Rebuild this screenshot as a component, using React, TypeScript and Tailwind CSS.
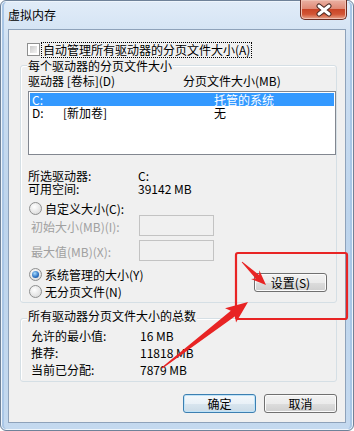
type Pt = [number, number];

// wedge-shaped annotation arrow, thin at the tail and widening towards the head
function arrowPoints(tail: Pt, tip: Pt, headLen: number, headHalf: number, neckHalf: number, tailHalf: number) {
  const dx = tip[0] - tail[0];
  const dy = tip[1] - tail[1];
  const len = Math.hypot(dx, dy);
  const ux = dx / len;
  const uy = dy / len;
  const nx = -uy;
  const ny = ux;
  const bx = tip[0] - ux * headLen;
  const by = tip[1] - uy * headLen;
  const pts: Pt[] = [
    [tail[0] + nx * tailHalf, tail[1] + ny * tailHalf],
    [bx + nx * neckHalf, by + ny * neckHalf],
    [bx + nx * headHalf - ux * 3, by + ny * headHalf - uy * 3],
    tip,
    [bx - nx * headHalf - ux * 3, by - ny * headHalf - uy * 3],
    [bx - nx * neckHalf, by - ny * neckHalf],
    [tail[0] - nx * tailHalf, tail[1] - ny * tailHalf],
  ];
  return pts.map((p) => p.join(",")).join(" ");
}

function Radio({ checked }: { checked?: boolean }) {
  return (
    <span className="flex h-[13px] w-[13px] shrink-0 items-center justify-center rounded-full border border-[#8e8f8f] bg-[radial-gradient(circle_at_40%_35%,#ffffff,#dcdcdc_80%)]">
      {checked && (
        <span className="h-[7px] w-[7px] rounded-full bg-[radial-gradient(circle_at_40%_35%,#a6dcff,#2a6fc0_60%,#1b4f91)]" />
      )}
    </span>
  );
}

function Button({ label, primary }: { label: string; primary?: boolean }) {
  return (
    <div
      className={
        primary
          ? "flex h-[19px] w-[73px] items-center justify-center rounded-[3px] border border-[#3c7fb1] bg-[linear-gradient(#f4f8fb_0%,#e9f1f7_50%,#d9e6ef_50%,#cbdbe7_100%)] text-[12px] leading-[12px] shadow-[inset_0_0_0_1px_#bfe3f8]"
          : "flex h-[19px] w-[73px] items-center justify-center rounded-[3px] border border-[#707070] bg-[linear-gradient(#f2f2f2_0%,#ebebeb_50%,#dddddd_50%,#cfcfcf_100%)] text-[12px] leading-[12px] shadow-[inset_0_0_0_1px_#fbfbfb]"
      }
    >
      {label}
    </div>
  );
}

function TextBox() {
  return <div className="h-[21px] w-[75px] border border-[#c3c3c3] bg-[#f0f0f0]" />;
}

export default function App() {
  return (
    <div className="relative h-[431px] w-[354px] font-['Noto_Sans_CJK_SC',sans-serif] text-[12px] leading-[12px] text-black">
      <div className="flex h-full w-full flex-col rounded-[6px] border border-[#6f8299] bg-[linear-gradient(180deg,#e1ecf8_0%,#cfe0f2_10%,#bdd4ec_50%,#c4d9ef_100%)] shadow-[inset_0_0_0_1px_#eef5fc,inset_3px_0_0_#a9c6e6,inset_-3px_0_0_#a9c6e6]">
        {/* title bar */}
        <div className="flex h-[28px] items-start justify-between">
          <div className="pl-[7px] pt-[8px]">虚拟内存</div>
          <div className="-mt-[1px] mr-[6px] flex h-[20px] w-[47px] items-center justify-center rounded-b-[5px] border border-t-0 border-[#6b2c22] bg-[linear-gradient(#eab1a3_0%,#e08a76_45%,#c94527_50%,#d25535_75%,#e8a58d_100%)] shadow-[inset_0_0_0_1px_#f0c0b2]">
            <svg width="18" height="14" viewBox="0 0 18 14">
              <path d="M4 3 L14 11 M14 3 L4 11" stroke="#4a2a24" strokeWidth="5" strokeLinecap="round" />
              <path d="M4 3 L14 11 M14 3 L4 11" stroke="#ffffff" strokeWidth="3" strokeLinecap="round" />
            </svg>
          </div>
        </div>

        {/* client area */}
        <div className="ml-[7px] flex h-[394px] w-[338px] flex-col border border-[#8ea2ba] bg-[#f0f0f0]">
          {/* auto manage checkbox */}
          <div className="ml-[18px] mt-[12px] flex h-[15px] items-center">
            <span className="h-[13px] w-[13px] shrink-0 border border-[#8e8f8f] bg-white p-[2px]">
              <span className="block h-full w-full bg-gradient-to-br from-[#c9c9c9] to-[#f4f4f4]" />
            </span>
            <span className="ml-[1px] flex h-[16px] items-center border border-dotted border-black px-[1px]">
              自动管理所有驱动器的分页文件大小(A)
            </span>
          </div>

          {/* per-drive group */}
          <div className="relative ml-[11px] mt-[8px] h-[238px] w-[317px] rounded-[3px] border border-[#d5dfe5] shadow-[inset_1px_1px_0_#ffffff]">
            <span className="absolute -top-[6px] left-[6px] bg-[#f0f0f0] px-[1px]">每个驱动器的分页文件大小</span>
            <div className="flex flex-col pl-[7px]">
              <div className="mt-[9px] flex h-[12px]">
                <span className="w-[155px]">驱动器 [卷标](D)</span>
                <span>分页文件大小(MB)</span>
              </div>
              <div className="mt-[4px] h-[64px] w-[308px] border border-[#828790] bg-white p-[1px]">
                <div className="flex h-[13px] items-center bg-[#3399ff] pl-[2px] text-white">
                  <span className="w-[182px]">C:</span>
                  <span>托管的系统</span>
                </div>
                <div className="flex h-[13px] items-center pl-[2px]">
                  <span className="w-[31px]">D:</span>
                  <span className="w-[151px]">[新加卷]</span>
                  <span>无</span>
                </div>
              </div>
              <div className="mt-[15px] flex h-[13px]">
                <span className="w-[110px]">所选驱动器:</span>
                <span>C:</span>
              </div>
              <div className="flex h-[13px]">
                <span className="w-[110px]">可用空间:</span>
                <span>39142 MB</span>
              </div>
              <div className="mt-[6px] flex h-[13px] items-center pl-[1px]">
                <Radio />
                <span className="ml-[3px]">自定义大小(C):</span>
              </div>
              <div className="flex h-[21px] items-center pl-[3px] text-[#a0a0a0]">
                <span className="w-[108px] pt-[3px]">初始大小(MB)(I):</span>
                <TextBox />
              </div>
              <div className="mt-[4px] flex h-[21px] items-center pl-[3px] text-[#a0a0a0]">
                <span className="w-[108px] pt-[3px]">最大值(MB)(X):</span>
                <TextBox />
              </div>
              <div className="flex items-start justify-between pr-[9px]">
                <div className="flex flex-col">
                  <div className="mt-[7px] flex h-[13px] items-center pl-[1px]">
                    <Radio checked />
                    <span className="ml-[3px]">系统管理的大小(Y)</span>
                  </div>
                  <div className="mt-[4px] flex h-[13px] items-center pl-[1px]">
                    <Radio />
                    <span className="ml-[3px]">无分页文件(N)</span>
                  </div>
                </div>
                <div className="mt-[12px]">
                  <Button label="设置(S)" />
                </div>
              </div>
            </div>
          </div>

          {/* totals group */}
          <div className="relative ml-[11px] mt-[15px] h-[64px] w-[317px] rounded-[3px] border border-[#d5dfe5] shadow-[inset_1px_1px_0_#ffffff]">
            <span className="absolute -top-[9px] left-[6px] bg-[#f0f0f0] px-[1px]">所有驱动器分页文件大小的总数</span>
            <div className="flex flex-col gap-[5px] pl-[10px] pt-[11px]">
              <div className="flex h-[12px]">
                <span className="w-[109px]">允许的最小值:</span>
                <span>16 MB</span>
              </div>
              <div className="flex h-[12px]">
                <span className="w-[109px]">推荐:</span>
                <span>11818 MB</span>
              </div>
              <div className="flex h-[12px]">
                <span className="w-[109px]">当前已分配:</span>
                <span>7879 MB</span>
              </div>
            </div>
          </div>

          {/* dialog buttons */}
          <div className="mr-[8px] mt-[12px] flex justify-end gap-[8px]">
            <Button label="确定" primary />
            <Button label="取消" />
          </div>
        </div>
      </div>

      {/* red annotation overlay */}
      <svg className="pointer-events-none absolute left-0 top-0" width="354" height="431" viewBox="0 0 354 431">
        <rect x="236" y="253" width="111" height="66" rx="2" fill="none" stroke="#e82424" strokeWidth="2.2" />
        <polygon points={arrowPoints([242, 262], [266, 285], 12, 6, 2.5, 0.5)} fill="#e82424" />
        <polygon points={arrowPoints([162, 368], [248, 302], 19, 9, 3.5, 0.6)} fill="#e82424" />
      </svg>
    </div>
  );
}
